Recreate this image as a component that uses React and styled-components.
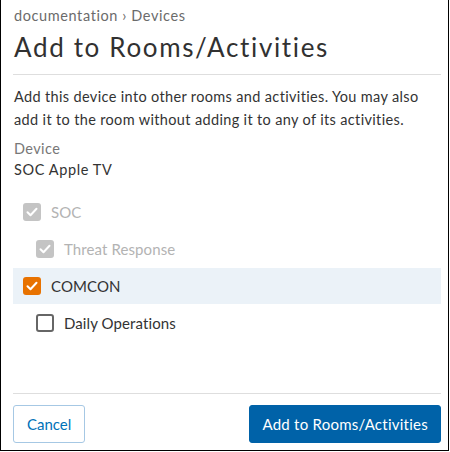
import React from "react";
import styled, { createGlobalStyle } from "styled-components";

const GlobalStyle = createGlobalStyle`
  html, body {
    margin: 0;
    padding: 0;
    background: #ffffff;
  }
  body {
    font-family: Lato, "Noto Sans", "Liberation Sans", sans-serif;
  }
`;

const Frame = styled.div`
  box-sizing: border-box;
  width: 449px;
  height: 451px;
  border: 1px solid #000;
  border-top: none;
  display: flex;
  flex-direction: column;
  padding: 6px 7px 7px 12px;
  background: #fff;
`;

const Breadcrumb = styled.div`
  font-size: 14.5px;
  line-height: 20px;
  color: #6b6b6b;
  padding-left: 1px;
  letter-spacing: 0.6px;
`;

const Title = styled.h1`
  margin: 5px 0 0 0;
  font-size: 26px;
  line-height: 32px;
  font-weight: 400;
  color: #313131;
  padding-left: 1px;
  letter-spacing: 1.65px;
`;

const Divider = styled.hr`
  margin: 11px 0 0 0;
  border: none;
  border-top: 1px solid #dedede;
`;

const Description = styled.p`
  margin: 10px 0 0 0;
  font-size: 14.5px;
  line-height: 23px;
  color: #333;
  padding-left: 1px;
  letter-spacing: 0.35px;
`;

const FieldLabel = styled.div`
  margin-top: 7px;
  font-size: 14.5px;
  line-height: 21px;
  color: #777;
  padding-left: 1px;
  letter-spacing: 0.4px;
`;

const FieldValue = styled.div`
  font-size: 14.5px;
  line-height: 21px;
  color: #333;
  padding-left: 1px;
  letter-spacing: 0.6px;
`;

const List = styled.div`
  margin-top: 14px;
  display: flex;
  flex-direction: column;
  gap: 1px;
`;

const Row = styled.label`
  height: 36px;
  display: flex;
  align-items: center;
  gap: 10px;
  padding-left: ${(p) => (p.$level ? 23 : 10)}px;
  background: ${(p) => (p.$active ? "#ebf2f8" : "transparent")};
  font-size: 15px;
  letter-spacing: 0.1px;
  color: ${(p) => (p.$disabled ? "#b3b3b3" : "#333")};
`;

const Box = styled.span`
  box-sizing: border-box;
  width: 18px;
  height: 18px;
  border-radius: 3px;
  display: flex;
  align-items: center;
  justify-content: center;
  background: ${(p) =>
    p.$checked ? (p.$disabled ? "#c4c4c4" : "#e87200") : "#fff"};
  border: ${(p) => (p.$checked ? "none" : "2px solid #666")};
`;

const Footer = styled.div`
  margin-top: auto;
  border-top: 1px solid #dedede;
  padding-top: 11px;
  display: flex;
  justify-content: space-between;
`;

const Button = styled.button`
  box-sizing: border-box;
  height: 38px;
  padding: 0 ${(p) => (p.$primary ? 12 : 13)}px;
  border-radius: 3px;
  font-family: inherit;
  font-size: 15px;
  letter-spacing: ${(p) => (p.$primary ? 0.25 : 0)}px;
  border: 1px solid ${(p) => (p.$primary ? "#0062a8" : "#a6c8e4")};
  background: ${(p) => (p.$primary ? "#0062a8" : "#fff")};
  color: ${(p) => (p.$primary ? "#fff" : "#0072b8")};
`;

function Check({ checked, disabled }) {
  return (
    <Box $checked={checked} $disabled={disabled}>
      {checked && (
        <svg width="12" height="10" viewBox="0 0 12 10">
          <path
            d="M1.5 5.2 L4.5 8.2 L10.5 1.8"
            fill="none"
            stroke="#fff"
            strokeWidth="2"
            strokeLinecap="round"
            strokeLinejoin="round"
          />
        </svg>
      )}
    </Box>
  );
}

const rooms = [
  { name: "SOC", level: 0, checked: true, disabled: true },
  { name: "Threat Response", level: 1, checked: true, disabled: true },
  { name: "COMCON", level: 0, checked: true, active: true },
  { name: "Daily Operations", level: 1, checked: false },
];

export default function App() {
  return (
    <>
      <GlobalStyle />
      <Frame>
        <Breadcrumb>documentation › Devices</Breadcrumb>
        <Title>Add to Rooms/Activities</Title>
        <Divider />
        <Description>
          Add this device into other rooms and activities. You may also add it
          to the room without adding it to any of its activities.
        </Description>
        <FieldLabel>Device</FieldLabel>
        <FieldValue>SOC Apple TV</FieldValue>
        <List>
          {rooms.map((r) => (
            <Row
              key={r.name}
              $level={r.level}
              $active={r.active}
              $disabled={r.disabled}
            >
              <Check checked={r.checked} disabled={r.disabled} />
              {r.name}
            </Row>
          ))}
        </List>
        <Footer>
          <Button>Cancel</Button>
          <Button $primary>Add to Rooms/Activities</Button>
        </Footer>
      </Frame>
    </>
  );
}
